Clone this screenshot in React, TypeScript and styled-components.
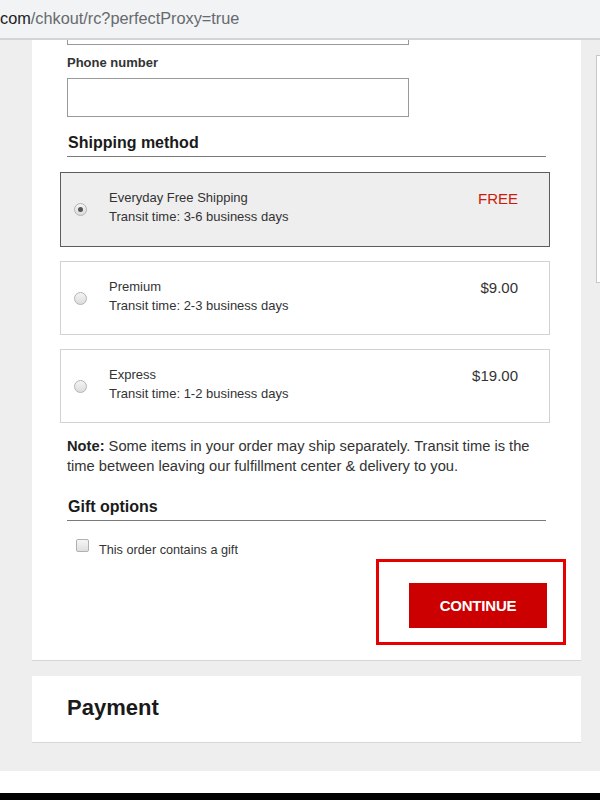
import React, { useState } from 'react';
import styled, { createGlobalStyle } from 'styled-components';

type Method = {
  id: string;
  name: string;
  transit: string;
  price: string;
};

const methods: Method[] = [
  { id: 'std', name: 'Everyday Free Shipping', transit: 'Transit time: 3-6 business days', price: 'FREE' },
  { id: 'prm', name: 'Premium', transit: 'Transit time: 2-3 business days', price: '$9.00' },
  { id: 'exp', name: 'Express', transit: 'Transit time: 1-2 business days', price: '$19.00' },
];

const GlobalStyle = createGlobalStyle`
  html, body {
    margin: 0;
    padding: 0;
    height: 800px;
    overflow: hidden;
    background: #ffffff;
    font-family: "Liberation Sans", Arial, sans-serif;
  }
  * {
    box-sizing: border-box;
  }
`;

const Screen = styled.div`
  display: flex;
  flex-direction: column;
  width: 600px;
  height: 800px;
`;

const AddressBar = styled.div`
  height: 40px;
  flex-shrink: 0;
  display: flex;
  align-items: center;
  padding-bottom: 2px;
  background: #f1f3f4;
  border-bottom: 2px solid #d4d4d4;
  font-family: "Liberation Sans", Arial, sans-serif;
  font-size: 16.3px;
  color: #666a6f;
  white-space: nowrap;
`;

const Host = styled.span`
  color: #202124;
`;

const Page = styled.div`
  height: 731px;
  flex-shrink: 0;
  overflow: hidden;
  background: #eeeeee;
  display: flex;
  align-items: flex-start;
  padding-left: 32px;
  gap: 15px;
`;

const Column = styled.div`
  width: 549px;
  flex-shrink: 0;
  display: flex;
  flex-direction: column;
  gap: 16px;
`;

const SideBox = styled.div`
  margin-top: 15px;
  width: 40px;
  height: 228px;
  flex-shrink: 0;
  background: #ffffff;
  border: 1px solid #c8c8c8;
`;

const Card = styled.div`
  background: #ffffff;
  padding: 0 35px;
  box-shadow: 0 1px 0 #d6d6d6;
`;

const MainCard = styled(Card)`
  padding-bottom: 15px;
`;

const CutInput = styled.div`
  width: 342px;
  height: 5px;
  border: 1px solid #9a9a9a;
  border-top: none;
`;

const Label = styled.div`
  margin-top: 10px;
  font-size: 13px;
  line-height: 16px;
  font-weight: bold;
  color: #333333;
`;

const TextInput = styled.input`
  display: block;
  margin-top: 7px;
  width: 342px;
  height: 39px;
  border: 1px solid #9a9a9a;
  padding: 0 8px;
  font-size: 14px;
  font-family: "Liberation Sans", Arial, sans-serif;
  outline: none;
`;

const SectionTitle = styled.h3<{ $top: number }>`
  margin: ${(p) => p.$top}px 0 0;
  padding: 0 0 3px 1px;
  font-size: 16px;
  line-height: 20px;
  font-weight: bold;
  color: #1a1a1a;
  border-bottom: 1px solid #7a7a7a;
`;

const Options = styled.div`
  margin: 15px 0 0 -7px;
  width: 490px;
  display: flex;
  flex-direction: column;
  gap: 14px;
`;

const Option = styled.label<{ $selected: boolean }>`
  height: ${(p) => (p.$selected ? 75 : 74)}px;
  display: flex;
  align-items: flex-start;
  padding: 15px 31px 0 13px;
  background: ${(p) => (p.$selected ? '#eeeeee' : '#ffffff')};
  border: 1px solid ${(p) => (p.$selected ? '#5c5c5c' : '#d2d2d2')};
  cursor: pointer;
`;

const Radio = styled.span<{ $checked: boolean }>`
  align-self: center;
  margin-top: -15px;
  width: 13px;
  height: 13px;
  flex-shrink: 0;
  border-radius: 50%;
  border: 1px solid #b3b3b3;
  background: linear-gradient(#f4f4f4, #dcdcdc);
  display: flex;
  align-items: center;
  justify-content: center;

  &::after {
    content: '';
    display: ${(p) => (p.$checked ? 'block' : 'none')};
    width: 5px;
    height: 5px;
    border-radius: 50%;
    background: #555555;
  }
`;

const OptionText = styled.div`
  margin-left: 22px;
  flex: 1;
  font-size: 13px;
  line-height: 19px;
  color: #333333;
`;

const Price = styled.div<{ $free: boolean }>`
  margin-top: 2px;
  font-size: 15px;
  line-height: 18px;
  color: ${(p) => (p.$free ? '#cc1a0a' : '#333333')};
`;

const Note = styled.p`
  margin: 13px 0 0;
  max-width: 470px;
  font-size: 14.7px;
  line-height: 20px;
  color: #333333;

  strong {
    color: #222222;
  }
`;

const GiftRow = styled.label`
  margin: 18px 0 0 9px;
  display: flex;
  align-items: flex-start;
  gap: 10px;
  font-size: 12.7px;
  line-height: 14px;
  color: #333333;
  cursor: pointer;
`;

const Checkbox = styled.span<{ $checked: boolean }>`
  width: 13px;
  height: 13px;
  flex-shrink: 0;
  border-radius: 2px;
  border: 1px solid #b0b0b0;
  background: linear-gradient(#f6f6f6, #dedede);
  position: relative;

  &::after {
    content: '';
    display: ${(p) => (p.$checked ? 'block' : 'none')};
    position: absolute;
    left: 3px;
    top: 0;
    width: 4px;
    height: 8px;
    border: solid #333;
    border-width: 0 2px 2px 0;
    transform: rotate(45deg);
  }
`;

const GiftText = styled.span`
  margin-top: 4px;
`;

const Actions = styled.div`
  display: flex;
  justify-content: flex-end;
  margin: 2px -20px 0 0;
`;

const Highlight = styled.div`
  border: 3px solid #e60000;
  padding: 21px 16px 14px 30px;
`;

const ContinueButton = styled.button`
  display: block;
  width: 138px;
  height: 45px;
  border: none;
  background: #cc0000;
  color: #ffffff;
  font-family: "Liberation Sans", Arial, sans-serif;
  font-size: 15px;
  font-weight: bold;
  letter-spacing: -0.2px;
  cursor: pointer;
`;

const PaymentCard = styled(Card)`
  padding-top: 19px;
  padding-bottom: 21px;
`;

const PaymentTitle = styled.h2`
  margin: 0;
  font-size: 22px;
  line-height: 26px;
  font-weight: bold;
  color: #1a1a1a;
`;

const WhiteStrip = styled.div`
  height: 22px;
  flex-shrink: 0;
  background: #ffffff;
`;

const BlackStrip = styled.div`
  height: 7px;
  flex-shrink: 0;
  background: #000000;
`;

const App: React.FC = () => {
  const [selected, setSelected] = useState('std');
  const [gift, setGift] = useState(false);

  return (
    <Screen>
      <GlobalStyle />
      <AddressBar>
        <Host>com</Host>/chkout/rc?perfectProxy=true
      </AddressBar>

      <Page>
        <Column>
          <MainCard>
            <CutInput />
            <Label>Phone number</Label>
            <TextInput type="tel" />

            <SectionTitle $top={16}>Shipping method</SectionTitle>
            <Options>
              {methods.map((m) => (
                <Option key={m.id} $selected={selected === m.id} onClick={() => setSelected(m.id)}>
                  <Radio $checked={selected === m.id} />
                  <OptionText>
                    <div>{m.name}</div>
                    <div>{m.transit}</div>
                  </OptionText>
                  <Price $free={m.price === 'FREE'}>{m.price}</Price>
                </Option>
              ))}
            </Options>

            <Note>
              <strong>Note:</strong> Some items in your order may ship separately. Transit time is the
              time between leaving our fulfillment center &amp; delivery to you.
            </Note>

            <SectionTitle $top={21}>Gift options</SectionTitle>
            <GiftRow onClick={() => setGift(!gift)}>
              <Checkbox $checked={gift} />
              <GiftText>This order contains a gift</GiftText>
            </GiftRow>

            <Actions>
              <Highlight>
                <ContinueButton type="button">CONTINUE</ContinueButton>
              </Highlight>
            </Actions>
          </MainCard>

          <PaymentCard>
            <PaymentTitle>Payment</PaymentTitle>
          </PaymentCard>
        </Column>
        <SideBox />
      </Page>

      <WhiteStrip />
      <BlackStrip />
    </Screen>
  );
};

export default App;
